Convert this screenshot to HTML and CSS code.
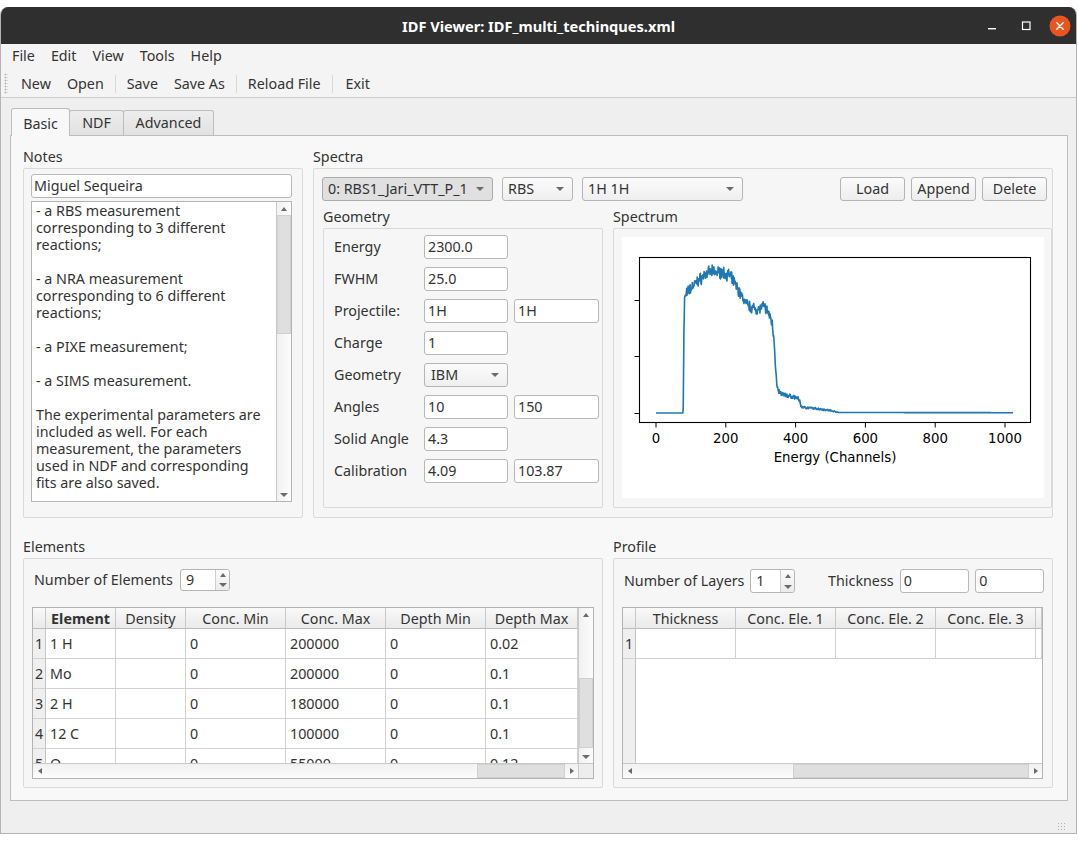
FILE: index.html
```html
<!DOCTYPE html>
<html lang="en">
<head>
<meta charset="utf-8">
<title>IDF Viewer: IDF_multi_techinques.xml</title>
<link rel="stylesheet" href="styles.css">
</head>
<body>
<div class="window">
  <header class="titlebar">
    <div></div>
    <div class="title">IDF Viewer: IDF_multi_techinques.xml</div>
    <div class="controls">
      <span class="ctl"><svg width="22" height="22" viewBox="0 0 22 22"><rect x="7" y="13" width="8" height="1.4" fill="#fff"/></svg></span>
      <span class="ctl"><svg width="22" height="22" viewBox="0 0 22 22"><rect x="7.5" y="7" width="7.5" height="7.5" fill="none" stroke="#fff" stroke-width="1.2"/></svg></span>
      <span class="ctl"><svg width="22" height="22" viewBox="0 0 22 22"><circle cx="11" cy="11" r="10.5" fill="#e95420"/><path d="M7.8 7.8l6.4 6.4M14.2 7.8l-6.4 6.4" stroke="#fff" stroke-width="1.4" stroke-linecap="round"/></svg></span>
    </div>
  </header>

  <nav class="menubar">
    <span class="menu-item">File</span>
    <span class="menu-item">Edit</span>
    <span class="menu-item">View</span>
    <span class="menu-item">Tools</span>
    <span class="menu-item">Help</span>
  </nav>

  <div class="toolbar">
    <span class="grip"></span>
    <span class="tool">New</span>
    <span class="tool">Open</span>
    <span class="tsep"></span>
    <span class="tool">Save</span>
    <span class="tool">Save As</span>
    <span class="tsep"></span>
    <span class="tool">Reload File</span>
    <span class="tsep"></span>
    <span class="tool">Exit</span>
  </div>

  <main class="central">
    <div class="tabs">
      <span class="tab tab-basic active">Basic</span>
      <span class="tab tab-ndf">NDF</span>
      <span class="tab tab-adv">Advanced</span>
    </div>

    <section class="pane">
      <div class="row-top">
        <div class="group">
          <div class="glabel">Notes</div>
          <div class="gbox notes-box">
            <div class="input name-input">Miguel Sequeira</div>
            <div class="textarea">
              <div class="ta-text">- a RBS measurement
corresponding to 3 different
reactions;

- a NRA measurement
corresponding to 6 different
reactions;

- a PIXE measurement;

- a SIMS measurement.

The experimental parameters are
included as well. For each
measurement, the parameters
used in NDF and corresponding
fits are also saved.</div>
              <div class="vscroll">
                <span class="sb-arrow"><span class="tri-up"></span></span>
                <span class="sb-handle ta-handle"></span>
                <span class="sb-track"></span>
                <span class="sb-arrow"><span class="tri-down"></span></span>
              </div>
            </div>
          </div>
        </div>

        <div class="group">
          <div class="glabel">Spectra</div>
          <div class="gbox spectra-box">
            <div class="combo-row">
              <div class="combo combo-spec"><span class="combo-text">0: RBS1_Jari_VTT_P_1</span><span class="tri-down"></span></div>
              <div class="combo combo-tech"><span class="combo-text">RBS</span><span class="tri-down"></span></div>
              <div class="combo combo-reac"><span class="combo-text">1H 1H</span><span class="tri-down"></span></div>
              <div class="btns">
                <span class="btn">Load</span>
                <span class="btn">Append</span>
                <span class="btn">Delete</span>
              </div>
            </div>

            <div class="geo-row">
              <div class="group">
                <div class="glabel">Geometry</div>
                <div class="gbox geo-box">
                  <span class="flabel">Energy</span><span class="input">2300.0</span><span></span>
                  <span class="flabel">FWHM</span><span class="input">25.0</span><span></span>
                  <span class="flabel">Projectile:</span><span class="input">1H</span><span class="input">1H</span>
                  <span class="flabel">Charge</span><span class="input">1</span><span></span>
                  <span class="flabel">Geometry</span><span class="combo combo-geo"><span class="combo-text">IBM</span><span class="tri-down"></span></span><span></span>
                  <span class="flabel">Angles</span><span class="input">10</span><span class="input">150</span>
                  <span class="flabel">Solid Angle</span><span class="input">4.3</span><span></span>
                  <span class="flabel">Calibration</span><span class="input">4.09</span><span class="input">103.87</span>
                </div>
              </div>

              <div class="group">
                <div class="glabel">Spectrum</div>
                <div class="gbox spectrum-box">
                  <div class="chart">
                    <svg width="422" height="261" viewBox="0 0 422 261">
                      <polyline id="spec" fill="none" stroke="#1f77b4" stroke-width="1.6" stroke-linejoin="round" points="34,176 60,176 61,60 100,30 140,60 170,70 180,170 400,176"/>
                      <rect x="17.5" y="20.5" width="391" height="165" fill="none" stroke="#000" stroke-width="1.1"/>
                      <g stroke="#000" stroke-width="1">
                        <line x1="34" y1="186" x2="34" y2="190.5"/>
                        <line x1="103.8" y1="186" x2="103.8" y2="190.5"/>
                        <line x1="173.6" y1="186" x2="173.6" y2="190.5"/>
                        <line x1="243.4" y1="186" x2="243.4" y2="190.5"/>
                        <line x1="313.2" y1="186" x2="313.2" y2="190.5"/>
                        <line x1="383" y1="186" x2="383" y2="190.5"/>
                        <line x1="17" y1="63.5" x2="12.5" y2="63.5"/>
                        <line x1="17" y1="119.5" x2="12.5" y2="119.5"/>
                        <line x1="17" y1="176.5" x2="12.5" y2="176.5"/>
                      </g>
                      <g class="ticks" text-anchor="middle" fill="#000">
                        <text x="34" y="206">0</text>
                        <text x="103.8" y="206">200</text>
                        <text x="173.6" y="206">400</text>
                        <text x="243.4" y="206">600</text>
                        <text x="313.2" y="206">800</text>
                        <text x="383" y="206">1000</text>
                        <text x="213" y="225">Energy (Channels)</text>
                      </g>
                    </svg>
                  </div>
                </div>
              </div>
            </div>
          </div>
        </div>
      </div>

      <div class="row-bottom">
        <div class="group">
          <div class="glabel">Elements</div>
          <div class="gbox elements-box">
            <div class="ctrl-row">
              <span class="rlabel el-label">Number of Elements</span>
              <div class="spin el-spin"><span class="spin-val">9</span><span class="spin-btns"><span class="spin-half"><span class="tri-up"></span></span><span class="spin-half"><span class="tri-down"></span></span></span></div>
            </div>
            <div class="table el-table">
              <div class="viewport">
                <div class="grid el-grid">
                  <div class="hh"></div><div class="hh bold">Element</div><div class="hh">Density</div><div class="hh">Conc. Min</div><div class="hh">Conc. Max</div><div class="hh">Depth Min</div><div class="hh">Depth Max</div>
                  <div class="vh">1</div><div class="c">1 H</div><div class="c"></div><div class="c">0</div><div class="c">200000</div><div class="c">0</div><div class="c">0.02</div>
                  <div class="vh">2</div><div class="c">Mo</div><div class="c"></div><div class="c">0</div><div class="c">200000</div><div class="c">0</div><div class="c">0.1</div>
                  <div class="vh">3</div><div class="c">2 H</div><div class="c"></div><div class="c">0</div><div class="c">180000</div><div class="c">0</div><div class="c">0.1</div>
                  <div class="vh">4</div><div class="c">12 C</div><div class="c"></div><div class="c">0</div><div class="c">100000</div><div class="c">0</div><div class="c">0.1</div>
                  <div class="vh">5</div><div class="c">O</div><div class="c"></div><div class="c">0</div><div class="c">55000</div><div class="c">0</div><div class="c">0.12</div>
                  <div class="vh">6</div><div class="c">N</div><div class="c"></div><div class="c">0</div><div class="c">30000</div><div class="c">0</div><div class="c">0.1</div>
                </div>
              </div>
              <div class="vscroll">
                <span class="sb-arrow"><span class="tri-up"></span></span>
                <span class="sb-track el-vtrack"></span>
                <span class="sb-handle el-vhandle"></span>
                <span class="sb-track"></span>
                <span class="sb-arrow"><span class="tri-down"></span></span>
              </div>
              <div class="hscroll">
                <span class="sb-arrow"><span class="tri-left"></span></span>
                <span class="sb-track"></span>
                <span class="sb-handle el-hhandle"></span>
                <span class="sb-arrow"><span class="tri-right"></span></span>
              </div>
              <div class="sb-corner"></div>
            </div>
          </div>
        </div>

        <div class="group">
          <div class="glabel">Profile</div>
          <div class="gbox profile-box">
            <div class="ctrl-row">
              <span class="rlabel pr-label">Number of Layers</span>
              <div class="spin pr-spin"><span class="spin-val">1</span><span class="spin-btns"><span class="spin-half"><span class="tri-up"></span></span><span class="spin-half"><span class="tri-down"></span></span></span></div>
              <span class="rlabel th-label">Thickness</span>
              <span class="input th-in1">0</span>
              <span class="input th-in2">0</span>
            </div>
            <div class="table pr-table">
              <div class="viewport pr-viewport">
                <div class="grid pr-grid">
                  <div class="hh"></div><div class="hh">Thickness</div><div class="hh">Conc. Ele. 1</div><div class="hh">Conc. Ele. 2</div><div class="hh">Conc. Ele. 3</div><div class="hh"></div>
                  <div class="vh">1</div><div class="c"></div><div class="c"></div><div class="c"></div><div class="c"></div><div class="c"></div>
                </div>
              </div>
              <div class="hscroll">
                <span class="sb-arrow"><span class="tri-left"></span></span>
                <span class="sb-track"></span>
                <span class="sb-handle pr-hhandle"></span>
                <span class="sb-arrow"><span class="tri-right"></span></span>
              </div>
            </div>
          </div>
        </div>
      </div>
    </section>

    <div class="statusbar"><span class="sizegrip"></span></div>
  </main>
</div>
<script src="script.js"></script>
</body>
</html>
```

FILE: styles.css
```css
* { box-sizing: border-box; }
html, body { margin: 0; padding: 0; }
body {
  background: #ffffff;
  font-family: "Noto Sans", "DejaVu Sans", sans-serif;
  font-size: 14.3px;
  line-height: 18px;
  color: #333333;
}

.window {
  width: 1077px;
  height: 827px;
  margin-top: 7px;
  display: flex;
  flex-direction: column;
  background: #efefef;
  border: 1px solid #b4b4b4;
  border-top: 0;
  border-radius: 8px 8px 0 0;
  overflow: hidden;
}

/* title bar */
.titlebar {
  flex: none;
  height: 37px;
  background: #2f2f2f;
  display: grid;
  grid-template-columns: 1fr auto 1fr;
  align-items: center;
}
.title { color: #ffffff; font-weight: 700; font-size: 14.6px; }
.controls { justify-self: end; display: flex; align-items: center; gap: 12px; padding-right: 5px; }
.ctl { width: 22px; height: 22px; display: flex; }

/* menu + toolbar */
.menubar {
  flex: none;
  height: 24px;
  background: #f4f4f4;
  display: flex;
  align-items: center;
  padding-left: 3px;
}
.menu-item { padding: 0 8px; }

.toolbar {
  flex: none;
  height: 30px;
  background: #f4f4f4;
  border-bottom: 1px solid #cdcdcd;
  display: flex;
  align-items: center;
  padding: 2px 0 0 3px;
}
.grip {
  width: 4px;
  height: 21px;
  margin-right: 5px;
  background-image: radial-gradient(circle, #a9a9a9 0.8px, transparent 1.1px);
  background-size: 3px 3px;
}
.tool { padding: 0 7px; margin: 0 1px; }
.tool:last-child { margin-left: 3px; }
.tsep { width: 1px; height: 18px; background: #d8d8d8; margin: 0 3px; }

/* central */
.central {
  flex: 1;
  display: flex;
  flex-direction: column;
  padding: 10px 8px 0 9px;
}
.tabs { flex: none; height: 27px; display: flex; align-items: flex-end; padding-left: 1px; }
.tab {
  height: 25px;
  line-height: 24px;
  text-align: center;
  border: 1px solid #bdbdbd;
  border-bottom: 0;
  border-radius: 3px 3px 0 0;
  background: linear-gradient(#ededed, #e1e1e1);
  margin-left: -1px;
}
.tab:first-child { margin-left: 0; }
.tab-basic { width: 59px; }
.tab-ndf { width: 55px; }
.tab-adv { width: 91px; }
.tab.active {
  height: 28px;
  line-height: 29px;
  background: #f8f8f8;
  position: relative;
  z-index: 1;
  margin-bottom: -1px;
}

.pane {
  flex: none;
  height: 666px;
  background: #f8f8f8;
  border: 1px solid #bdbdbd;
  padding: 12px 0 0 12px;
}
.statusbar { flex: 1; display: flex; justify-content: flex-end; align-items: flex-end; padding: 0 2px 2px 0; }
.sizegrip {
  width: 9px; height: 9px;
  background-image: radial-gradient(circle, #b0b0b0 0.7px, transparent 1px);
  background-size: 3px 3px;
}

/* groups */
.row-top { display: grid; grid-template-columns: 280px 740px; column-gap: 10px; }
.row-bottom { display: grid; grid-template-columns: 580px 440px; column-gap: 10px; margin-top: 20px; }
.group { display: flex; flex-direction: column; }
.glabel { height: 18px; line-height: 18px; margin-bottom: 2px; }
.gbox { border: 1px solid #dadada; border-radius: 2px; background: #f6f6f6; }

/* inputs */
.input {
  height: 24px;
  border: 1px solid #b8b8b8;
  border-radius: 3px;
  background: #ffffff;
  padding: 0 3px;
  line-height: 22px;
  white-space: nowrap;
  overflow: hidden;
}
.combo {
  height: 24px;
  display: flex;
  align-items: center;
  border: 1px solid #b5b5b5;
  border-radius: 3px;
  background: linear-gradient(#fbfbfb, #efefef);
  padding: 0 8px 0 5px;
}
.combo-text { flex: 1; overflow: hidden; white-space: nowrap; }
.combo-spec { width: 171px; background: #e0e0e0; border-color: #ababab; }
.combo-spec .combo-text { margin-right: 6px; }
.combo-tech { width: 71px; }
.combo-reac { width: 161px; }
.combo-geo { width: 84px; padding-left: 6px; }
.btns { margin-left: auto; display: flex; gap: 6px; }
.btn {
  width: 65px;
  height: 24px;
  line-height: 22px;
  text-align: center;
  border: 1px solid #b4b4b4;
  border-radius: 3px;
  background: linear-gradient(#fbfbfb, #ededed);
}

/* triangles */
.tri-up, .tri-down, .tri-left, .tri-right { width: 0; height: 0; flex: none; }
.tri-up { border-left: 3.5px solid transparent; border-right: 3.5px solid transparent; border-bottom: 4px solid #6a6a6a; }
.tri-down { border-left: 4px solid transparent; border-right: 4px solid transparent; border-top: 4px solid #6a6a6a; }
.tri-left { border-top: 3.5px solid transparent; border-bottom: 3.5px solid transparent; border-right: 4px solid #6a6a6a; }
.tri-right { border-top: 3.5px solid transparent; border-bottom: 3.5px solid transparent; border-left: 4px solid #6a6a6a; }

/* notes */
.notes-box { height: 350px; display: flex; flex-direction: column; gap: 3px; padding: 5px 10px 15px 7px; }
.name-input { padding-left: 2px; }
.textarea { flex: 1; display: flex; border: 1px solid #b4b4b4; background: #ffffff; min-height: 0; }
.ta-text { flex: 1; padding: 0 4px; white-space: pre; line-height: 17px; overflow: hidden; }

/* scrollbars */
.vscroll {
  flex: none;
  width: 15px;
  display: flex;
  flex-direction: column;
  border-left: 1px solid #c9c9c9;
  background: linear-gradient(to right, #f1f1f1, #fcfcfc);
}
.hscroll {
  display: flex;
  height: 15px;
  border-top: 1px solid #c9c9c9;
  background: linear-gradient(#f1f1f1, #fcfcfc);
}
.sb-arrow { flex: none; height: 13px; display: flex; align-items: center; justify-content: center; }
.hscroll .sb-arrow { width: 13px; height: auto; }
.sb-track { flex: 1; }
.sb-handle { flex: none; background: #dfdfdf; border: 1px solid #d0d0d0; }
.ta-handle { height: 119px; }
.el-vtrack { flex: none; height: 57px; }
.el-vhandle { height: 70px; }
.el-hhandle { width: 88px; }
.pr-hhandle { width: 236px; }
.sb-corner { background: #ededed; border-left: 1px solid #c9c9c9; border-top: 1px solid #c9c9c9; }

/* spectra */
.spectra-box { height: 350px; padding: 8px 0 9px 8px; display: flex; flex-direction: column; }
.combo-row { display: flex; align-items: center; gap: 9px; height: 24px; padding-right: 5px; }
.geo-row { display: grid; grid-template-columns: 280px 439px; column-gap: 10px; margin-top: 7px; padding-left: 1px; }
.geo-box {
  height: 280px;
  display: grid;
  grid-template-columns: 84px 84px 85px;
  grid-auto-rows: 24px;
  row-gap: 8px;
  column-gap: 6px;
  align-items: center;
  align-content: start;
  padding: 6px 0 0 10px;
}
.flabel { white-space: nowrap; }
.spectrum-box { height: 280px; padding: 8px 0 0 8px; }
.chart { width: 422px; height: 261px; background: #ffffff; }
.chart svg { display: block; }
.ticks { font-family: "DejaVu Sans", sans-serif; font-size: 13.3px; }

/* elements / profile */
.elements-box { height: 230px; padding: 10px 8px 8px 8px; }
.profile-box { height: 230px; padding: 10px 8px 8px 8px; }
.ctrl-row { display: flex; align-items: flex-start; height: 24px; }
.rlabel { white-space: nowrap; line-height: 22px; }
.el-label { width: 146px; margin-left: 2px; line-height: 22px; }
.pr-label { width: 127px; margin-left: 2px; line-height: 24px; }
.th-label { width: 72px; margin-left: 33px; line-height: 24px; }
.th-in1 { width: 70px; }
.th-in2 { width: 69px; margin-left: 6px; }

.spin {
  display: flex;
  height: 22px;
  border: 1px solid #b5b5b5;
  border-radius: 3px;
  background: #ffffff;
}
.el-spin { width: 50px; }
.pr-spin { width: 45px; height: 24px; }
.spin-val { flex: 1; padding-left: 5px; line-height: 20px; }
.pr-spin .spin-val { line-height: 22px; }
.spin-btns {
  width: 14px;
  display: flex;
  flex-direction: column;
  border-left: 1px solid #cfcfcf;
  background: linear-gradient(#fbfbfb, #ececec);
  border-radius: 0 3px 3px 0;
}
.spin-half { flex: 1; display: flex; align-items: center; justify-content: center; }

.table { margin-top: 14px; border: 1px solid #b3b3b3; background: #ffffff; display: grid; }
.el-table { width: 562px; height: 172px; grid-template-columns: 545px 15px; grid-template-rows: 155px 15px; }
.pr-table { width: 421px; height: 172px; grid-template-columns: 419px; grid-template-rows: 155px 15px; }
.viewport { overflow: hidden; background: #ffffff; }
.pr-viewport { background: linear-gradient(to right, #efefef 0, #efefef 12px, #c4c4c4 12px, #c4c4c4 13px, #ffffff 13px); }
.grid { display: grid; grid-auto-rows: 30px; }
.el-grid { grid-template-columns: 13px 70px 70px 100px 100px 100px 92px; grid-template-rows: 21px; }
.pr-grid { grid-template-columns: 13px 100px 100px 100px 100px 6px; grid-template-rows: 21px; }
.hh {
  line-height: 21px;
  text-align: center;
  white-space: nowrap;
  overflow: hidden;
  border-right: 1px solid #c9c9c9;
  border-bottom: 1px solid #bcbcbc;
  background: linear-gradient(#f9f9f9, #e9e9e9);
}
.hh.bold { font-weight: 700; }
.vh {
  line-height: 29px;
  text-align: center;
  background: #efefef;
  border-right: 1px solid #c4c4c4;
  border-bottom: 1px solid #d2d2d2;
}
.c {
  line-height: 29px;
  padding-left: 4px;
  white-space: nowrap;
  overflow: hidden;
  background: #ffffff;
  border-right: 1px solid #d2d2d2;
  border-bottom: 1px solid #d2d2d2;
}
```

FILE: script.js
```js
(function () {
  var ctrl = [[0,0],[77,0],[78,5],[80,80],[82,114],[86,119],[100,125],[120,132],[140,138],[155,141],[175,141],[195,140],[210,138],[225,130],[240,120],[255,111],[270,106],[290,104],[300,105],[308,107],[316,104],[326,97],[333,90],[338,75],[342,50],[346,28],[350,22],[360,19],[380,17],[395,16],[405,15],[412,12],[416,6],[440,5],[470,4],[500,2.5],[525,0.5],[1023,0.3]];
  function base(c) {
    for (var i = 1; i < ctrl.length; i++) {
      if (c <= ctrl[i][0]) {
        var a = ctrl[i - 1], b = ctrl[i];
        var t = (c - a[0]) / (b[0] - a[0]);
        return a[1] + t * (b[1] - a[1]);
      }
    }
    return 0;
  }
  var s = 7;
  function rnd() { s = (s * 16807) % 2147483647; return s / 2147483647; }
  var out = [];
  for (var c = 0; c < 1024; c++) {
    var h = base(c);
    var n = h > 1 ? (rnd() + rnd() - 1) * Math.sqrt(h) * 0.6 : 0;
    out.push((34 + c * 0.349).toFixed(2) + ',' + (176 - h - n).toFixed(2));
  }
  document.getElementById('spec').setAttribute('points', out.join(' '));
})();
```
